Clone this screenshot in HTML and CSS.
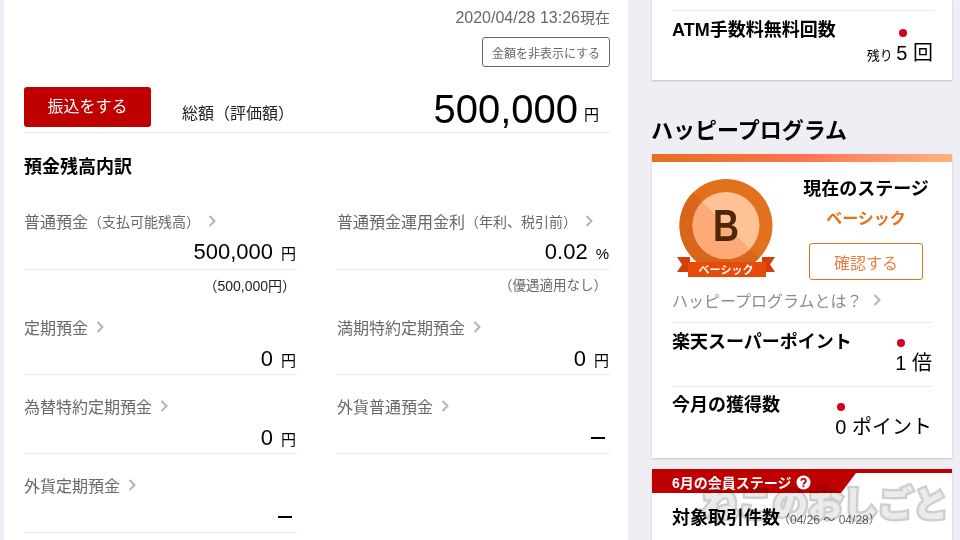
FILE: index.html
```html
<!DOCTYPE html>
<html lang="ja">
<head>
    <meta name="viewport" content="width=device-width, initial-scale=1">
    <link rel="stylesheet" href="styles.css">
</head>
<body>
    <div class="page">
        <div class="main-panel">
            <div class="stamp">2020/04/28 13:26<small>現在</small></div>
            <div class="hide-row"><button class="hide-btn">金額を非表示にする</button></div>
            <div class="total-row">
                <button class="transfer-btn">振込をする</button>
                <span class="total-label">総額（評価額）</span>
                <span class="total-value">500,000</span>
                <span class="total-unit">円</span>
            </div>
            <h2 class="section-title">預金残高内訳</h2>
            <div class="balance-grid">
                <div class="balance-item tall">
                    <div class="balance-label">普通預金<small>（支払可能残高）</small><svg class="chev" viewBox="0 0 8 12"><path d="M1.5 1l5 5-5 5"/></svg></div>
                    <div class="balance-value">500,000<span class="unit">円</span></div>
                    <div class="balance-note note-dark">（500,000円）</div>
                </div>
                <div class="balance-item tall">
                    <div class="balance-label">普通預金運用金利<small>（年利、税引前）</small><svg class="chev" viewBox="0 0 8 12"><path d="M1.5 1l5 5-5 5"/></svg></div>
                    <div class="balance-value">0.02<span class="unit">%</span></div>
                    <div class="balance-note">（優遇適用なし）</div>
                </div>
                <div class="balance-item">
                    <div class="balance-label">定期預金<svg class="chev" viewBox="0 0 8 12"><path d="M1.5 1l5 5-5 5"/></svg></div>
                    <div class="balance-value">0<span class="unit">円</span></div>
                </div>
                <div class="balance-item">
                    <div class="balance-label">満期特約定期預金<svg class="chev" viewBox="0 0 8 12"><path d="M1.5 1l5 5-5 5"/></svg></div>
                    <div class="balance-value">0<span class="unit">円</span></div>
                </div>
                <div class="balance-item">
                    <div class="balance-label">為替特約定期預金<svg class="chev" viewBox="0 0 8 12"><path d="M1.5 1l5 5-5 5"/></svg></div>
                    <div class="balance-value">0<span class="unit">円</span></div>
                </div>
                <div class="balance-item">
                    <div class="balance-label">外貨普通預金<svg class="chev" viewBox="0 0 8 12"><path d="M1.5 1l5 5-5 5"/></svg></div>
                    <div class="balance-value"><span class="dash"></span></div>
                </div>
                <div class="balance-item">
                    <div class="balance-label">外貨定期預金<svg class="chev" viewBox="0 0 8 12"><path d="M1.5 1l5 5-5 5"/></svg></div>
                    <div class="balance-value"><span class="dash"></span></div>
                </div>
            </div>
        </div>

        <div class="side">
            <div class="card atm-card">
                <div class="stat-row">
                    <div class="stat-title">ATM手数料無料回数</div>
                    <div class="stat-value atm-value">
                        <i class="dot"></i>
                        <div class="stat-num"><small>残り</small> 5 回</div>
                    </div>
                </div>
            </div>

            <h2 class="side-title">ハッピープログラム</h2>
            <div class="card happy-card">
                <div class="stage-row">
                    <svg class="medal" viewBox="0 0 100 100">
                        <circle cx="50" cy="46.500" r="46.500" fill="#e2711d"/>
                        <path d="M17.100 13.600A46.500 46.500 0 0 0 82.900 79.400z" fill="#d9651a"/>
                        <circle cx="50" cy="46.500" r="33.500" fill="#ffc294"/>
                        <path d="M26.300 22.800A33.500 33.500 0 0 0 73.700 70.200z" fill="#fdaa76"/>
                        <path d="M1 78h13v15H1l5-7.500z" fill="#d23d08"/>
                        <path d="M99 78H86v15h13l-5-7.500z" fill="#d23d08"/>
                        <rect x="12" y="83" width="78" height="15" fill="#ea4a09"/>
                        <text transform="translate(50 62) scale(.82 1)" text-anchor="middle" class="medal-letter">B</text>
                        <text x="50" y="95" text-anchor="middle" class="medal-name">ベーシック</text>
                    </svg>
                    <div class="stage-info">
                        <div class="stage-head">現在のステージ</div>
                        <div class="stage-name">ベーシック</div>
                        <button class="stage-btn">確認する</button>
                    </div>
                </div>
                <div class="about-link">ハッピープログラムとは？<svg class="chev" viewBox="0 0 8 12"><path d="M1.5 1l5 5-5 5"/></svg></div>
                <div class="stat-row point-row">
                    <div class="stat-title">楽天スーパーポイント</div>
                    <div class="stat-value">
                        <i class="dot"></i>
                        <div class="stat-num">1 倍</div>
                    </div>
                </div>
                <div class="stat-row point-row">
                    <div class="stat-title">今月の獲得数</div>
                    <div class="stat-value">
                        <i class="dot"></i>
                        <div class="stat-num">0 ポイント</div>
                    </div>
                </div>
            </div>

            <div class="card member-card">
                <div class="member-flag">6月の会員ステージ
                    <svg class="help" viewBox="0 0 16 16"><circle cx="8" cy="8" r="7.500" fill="#fff"/><path d="M5.500 6.200a2.500 2.300 0 1 1 3.800 2c-.9.600-1.300 1-1.300 1.800" fill="none" stroke="#bf0000" stroke-width="2"/><rect x="7" y="11" width="2" height="2" fill="#bf0000"/></svg>
                </div>
                <div class="member-count">対象取引件数<small>（04/26 ～ 04/28）</small></div>
            </div>
        </div>
    </div>
    <div class="watermark">ねこのおしごと</div>
</body>
</html>
```

FILE: styles.css
```css
html, body {
    margin: 0;
    height: 540px;
    overflow: hidden;
}
body {
    position: relative;
    background: #eeeef4;
    font-family: "Liberation Sans", "Noto Sans CJK JP", sans-serif;
    color: #000;
}
button {
    font-family: inherit;
    cursor: pointer;
}
.page {
    display: flex;
    align-items: flex-start;
    gap: 24px;
    padding-left: 4px;
}

/* left panel */
.main-panel {
    width: 624px;
    height: 540px;
    box-sizing: border-box;
    padding: 9px 18px 0 20px;
    background: #fff;
}
.stamp {
    text-align: right;
    font-size: 16px;
    line-height: 18px;
    color: #686868;
}
.stamp small {
    font-size: 15px;
}
.hide-row {
    display: flex;
    justify-content: flex-end;
    margin-top: 10px;
}
.hide-btn {
    width: 128px;
    height: 30px;
    padding: 0;
    background: #fff;
    border: 1px solid #686868;
    border-radius: 3px;
    font-size: 12px;
    color: #686868;
}
.total-row {
    display: flex;
    align-items: flex-end;
    height: 65px;
    border-bottom: 1px solid #e8e8e8;
}
.transfer-btn {
    width: 127px;
    height: 40px;
    margin-bottom: 5px;
    padding: 0 0 4px;
    background: #bf0000;
    border: 0;
    border-radius: 3px;
    font-size: 16px;
    color: #fff;
}
.total-label {
    margin: 0 auto 8px 31px;
    font-size: 16px;
    line-height: 20px;
    color: #222;
}
.total-value {
    font-size: 40px;
    line-height: 46px;
}
.total-unit {
    width: 32px;
    margin-bottom: 7px;
    padding-left: 6px;
    box-sizing: border-box;
    font-size: 15px;
    line-height: 20px;
}
.section-title {
    margin: 22px 0 0;
    font-size: 18px;
    line-height: 24px;
}
.balance-grid {
    display: grid;
    grid-template-columns: 273px 273px;
    column-gap: 40px;
    margin-top: 32px;
}
.balance-item {
    height: 79px;
}
.balance-item.tall {
    height: 106px;
}
.balance-label {
    display: flex;
    align-items: center;
    height: 20px;
    font-size: 16px;
    color: #686868;
}
.balance-label small {
    font-size: 14px;
}
.balance-label .chev {
    margin-left: 8px;
}
.chev {
    width: 8px;
    height: 12px;
    flex: none;
    fill: none;
    stroke: #b4b4b4;
    stroke-width: 2;
}
.balance-value {
    display: flex;
    align-items: baseline;
    justify-content: flex-end;
    height: 38px;
    padding: 9px 1px 0 0;
    box-sizing: border-box;
    border-bottom: 1px solid #e8e8e8;
    font-size: 22px;
    line-height: 26px;
}
.tall .balance-value {
    height: 39px;
    padding-top: 8px;
}
.unit {
    margin-left: 8px;
    font-size: 15px;
}
.dash {
    display: block;
    width: 14px;
    height: 2px;
    margin: 12px 4px 0 0;
    background: #000;
}
.balance-note {
    padding: 7px 3px 0 0;
    text-align: right;
    font-size: 13.500px;
    line-height: 18px;
    color: #686868;
}
.balance-note.note-dark {
    padding-right: 1px;
    font-size: 14px;
    color: #222;
}

/* right column */
.side {
    width: 300px;
}
.card {
    background: #fff;
    box-shadow: 0 1px 2px rgba(0,0,0,0.2);
}
.atm-card {
    height: 80px;
    box-sizing: border-box;
    padding: 10px 18px 0 20px;
}
.stat-row {
    display: flex;
    justify-content: space-between;
    align-items: flex-start;
    border-top: 1px solid #e8e8e8;
}
.stat-title {
    font-size: 18px;
    font-weight: bold;
    line-height: 24px;
    margin-top: 7px;
}
.stat-value {
    display: flex;
    flex-direction: column;
    margin-top: 16px;
}
.dot {
    display: block;
    width: 8px;
    height: 8px;
    margin-left: 2px;
    border-radius: 50%;
    background: #d0021b;
}
.stat-num {
    font-size: 20px;
    line-height: 28px;
    margin-top: 2px;
    white-space: nowrap;
}
.stat-num small {
    margin-right: -2px;
    font-size: 13px;
}
.atm-value {
    margin: 18px 1px 0 0;
}
.atm-value .dot {
    margin-left: 32px;
}
.side-title {
    margin: 36px 0 0 -1px;
    font-size: 22px;
    font-weight: bold;
    line-height: 30px;
}
.happy-card {
    height: 304px;
    margin-top: 8px;
    box-sizing: border-box;
    padding: 8px 20px 0;
    border-top: 8px solid;
    border-image: linear-gradient(90deg, #e2711d, #ff7350 50%, #ffb380) 1;
}
.stage-row {
    display: flex;
    justify-content: space-between;
}
.medal {
    width: 100px;
    height: 100px;
    margin: 9px 0 0 4px;
}
.medal-letter {
    font-size: 44px;
    font-weight: bold;
    fill: #4f2608;
}
.medal-name {
    font-size: 11px;
    font-weight: bold;
    fill: #fff;
}
.stage-info {
    display: flex;
    flex-direction: column;
    align-items: center;
    width: 128px;
    margin-right: 2px;
}
.stage-head {
    font-size: 18px;
    font-weight: bold;
    line-height: 24px;
    margin-top: 7px;
    white-space: nowrap;
}
.stage-name {
    font-size: 16px;
    font-weight: bold;
    line-height: 24px;
    margin-top: 6px;
    color: #e2711d;
}
.stage-btn {
    width: 114px;
    height: 37px;
    margin-top: 12px;
    padding: 0;
    background: #fff;
    border: 1px solid #e2711d;
    border-radius: 3px;
    font-size: 16px;
    color: #e8804a;
}
.about-link {
    display: flex;
    align-items: center;
    height: 24px;
    margin-top: 8px;
    font-size: 16px;
    color: #8c8c8c;
}
.about-link .chev {
    margin-left: 10px;
}
.point-row {
    height: 63px;
    margin-top: 10px;
}
.point-row + .point-row {
    margin-top: 0;
}
.point-row + .point-row .stat-title {
    margin-top: 6px;
}
.member-card {
    height: 80px;
    margin-top: 11px;
    border-top: 4px solid #bf0000;
}
.member-flag {
    display: flex;
    align-items: center;
    gap: 4px;
    width: 204px;
    height: 20px;
    box-sizing: border-box;
    padding-left: 20px;
    padding-bottom: 2px;
    background: #bf0000;
    clip-path: polygon(0 0, 100% 0, 189px 100%, 0 100%);
    font-size: 14px;
    font-weight: bold;
    color: #fff;
}
.help {
    width: 15px;
    height: 15px;
}
.member-count {
    margin: 13px 0 0 20px;
    font-size: 18px;
    font-weight: bold;
    line-height: 24px;
}
.member-count small {
    font-size: 12px;
    font-weight: normal;
    color: #686868;
    margin-left: -2px;
}

/* site watermark over the screenshot */
.watermark {
    position: absolute;
    left: 703px;
    top: 483px;
    font-size: 35px;
    font-weight: 900;
    line-height: 44px;
    white-space: nowrap;
    color: #ebebeb;
    -webkit-text-stroke: 5px #cfcfcf;
    paint-order: stroke fill;
    mix-blend-mode: multiply;
}
```
